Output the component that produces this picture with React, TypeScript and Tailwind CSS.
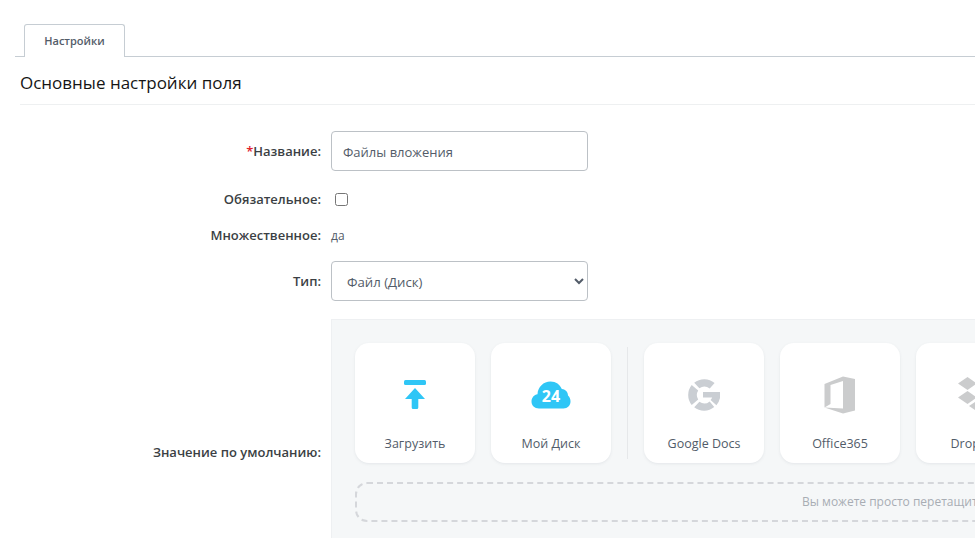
function UploadIcon() {
  return (
    <svg width="24" height="30" viewBox="0 0 24 30" fill="#2fc6f6">
      <rect x="1" y="0" width="22" height="5" rx="1.5" />
      <path d="M12 8 L22 19 L15.3 19 L15.3 27.5 Q15.3 29 13.8 29 L10.2 29 Q8.7 29 8.7 27.5 L8.7 19 L2 19 Z" />
    </svg>
  );
}

function DiskIcon() {
  return (
    <svg width="40" height="28" viewBox="0 0 40 28">
      <path
        d="M8 27.5 C3.5 27.5 0.5 24.5 0.5 20.5 C0.5 16.5 3.2 13.8 6.5 13.2 C6.8 6 12.5 0.5 19.5 0.5 C25 0.5 29 3.5 30.8 8 C35 8.5 37 11.5 37 14.5 C38.8 16 39.5 18 39.5 20.5 C39.5 24.5 36.5 27.5 32.5 27.5 Z"
        fill="#2fc6f6"
      />
      <text x="20" y="21" textAnchor="middle" fill="#fff" fontSize="16" fontWeight="700" fontFamily="'Open Sans', sans-serif">24</text>
    </svg>
  );
}

function GoogleIcon() {
  return (
    <svg width="32" height="32" viewBox="0 0 32 32" fill="#caced3" className="mt-px">
      <path d="M6.2 3.7 A16 16 0 0 1 26.6 4 L21.7 9.6 A8.5 8.5 0 0 0 11.4 9.2 Z" />
      <path d="M3.7 6 L10.2 11.4 A8.5 8.5 0 0 0 10.2 20.4 L3.7 26 A16 16 0 0 1 3.7 6 Z" />
      <path d="M6.2 28.3 L11.4 22.8 A8.5 8.5 0 0 0 21.7 22.4 L26.2 28 A16 16 0 0 1 6.2 28.3 Z" />
      <path d="M15 13 L32 13 A16 16 0 0 1 28.4 26.2 L22.6 21 A8.5 8.5 0 0 0 24.2 18.5 L15 18.5 Z" />
    </svg>
  );
}

function OfficeIcon() {
  return (
    <svg width="32" height="38" viewBox="0 0 32 38" fill="#cbcccd">
      <path
        d="M19 0.5 L31 3 L31 34.5 L19 37.5 L0.5 31.5 L0.5 8 Z M19 5 L6.5 9 L6.5 28 L0.5 31.5 L19 32.5 Z"
        fillRule="evenodd"
      />
    </svg>
  );
}

function DropboxIcon() {
  return (
    <svg width="40" height="35" viewBox="0 0 40 35" fill="#cbcccd" className="ml-[4px]">
      <path d="M9.5 0 L19 6.5 L9.5 13 L0 6.5 Z" />
      <path d="M30.5 0 L40 6.5 L30.5 13 L21 6.5 Z" />
      <path d="M9.5 14 L19 20.5 L9.5 27 L0 20.5 Z" />
      <path d="M30.5 14 L40 20.5 L30.5 27 L21 20.5 Z" />
      <path d="M20 23 L29 29 L20 35 L11 29 Z" />
    </svg>
  );
}

function Card({ title, icon }: { title: string; icon: React.ReactNode }) {
  return (
    <div className="flex h-[120px] w-[120px] shrink-0 flex-col items-center rounded-[14px] bg-white shadow-[0_1px_3px_rgba(82,92,105,0.10)]">
      <div className="flex h-[92px] w-full items-center justify-center pt-[11px]">{icon}</div>
      <div className="pt-px text-[12.5px] leading-[16px] whitespace-nowrap text-[#525c69]">{title}</div>
    </div>
  );
}

function Label({ children }: { children: React.ReactNode }) {
  return <div className="w-[321px] shrink-0 pt-px text-right text-[13px] font-semibold text-[#3b3f44]">{children}</div>;
}

export default function App() {
  return (
    <div className="h-[538px] w-[975px] overflow-hidden bg-white pt-6 font-['Open_Sans',sans-serif]">
      {/* Tabs */}
      <div className="ml-[15px] flex h-[33px] border-b border-[#c6cdd3] pl-[9px]">
        <div className="flex h-[33px] w-[101px] items-center justify-center rounded-t-[3px] border border-b-0 border-[#c6cdd3] bg-white text-[11px] font-semibold text-[#535c69]">
          Настройки
        </div>
      </div>

      {/* Section title */}
      <div className="ml-5 flex h-[48px] items-center border-b border-[#eef0f1] pt-[4px] text-[17px] text-[#151515]">
        Основные настройки поля
      </div>

      {/* Form */}
      <div className="flex flex-col">
        <div className="mt-[26px] flex h-10 items-center gap-[10px]">
          <Label>
            <span className="text-[#e0222d]">*</span>Название:
          </Label>
          <input
            readOnly
            value="Файлы вложения"
            className="h-10 w-[257px] rounded-[4px] border border-[#bcc1c6] bg-white px-[11px] pt-px text-[13px] text-[#535c69]"
          />
        </div>

        <div className="mt-[18px] flex h-5 items-center gap-[10px]">
          <Label>Обязательное:</Label>
          <input type="checkbox" className="ml-[4px] h-[13px] w-[13px]" />
        </div>

        <div className="mt-4 flex h-5 items-center gap-[10px]">
          <Label>Множественное:</Label>
          <span className="pt-px text-[12px] text-[#535c69]">да</span>
        </div>

        <div className="mt-4 flex h-10 items-center gap-[10px]">
          <Label>Тип:</Label>
          <select className="h-10 w-[257px] rounded-[4px] border border-[#bcc1c6] bg-white pt-px pl-[11px] text-[13.2px] text-[#535c69]">
            <option>Файл (Диск)</option>
          </select>
        </div>

        <div className="mt-[18px] flex h-[266px] items-center gap-[10px]">
          <Label>Значение по умолчанию:</Label>
          <div className="h-full min-w-0 flex-1 overflow-hidden border-t border-l border-[#eef0f2] bg-[#f5f7f8] pt-[23px] pl-[23px]">
            <div className="flex items-center gap-4">
              <Card title="Загрузить" icon={<UploadIcon />} />
              <Card title="Мой Диск" icon={<DiskIcon />} />
              <div className="h-[112px] w-px shrink-0 bg-[#e6e8ea]" />
              <Card title="Google Docs" icon={<GoogleIcon />} />
              <Card title="Office365" icon={<OfficeIcon />} />
              <Card title="Dropbox" icon={<DropboxIcon />} />
            </div>
            <div className="mt-[19px] flex h-10 w-[700px] items-center rounded-[12px] border-2 border-dashed border-[#d5d7db] pl-[445px] text-[12px] whitespace-nowrap text-[#a8adb4]">
              Вы можете просто перетащить файлы в эту область
            </div>
          </div>
        </div>
      </div>
    </div>
  );
}
